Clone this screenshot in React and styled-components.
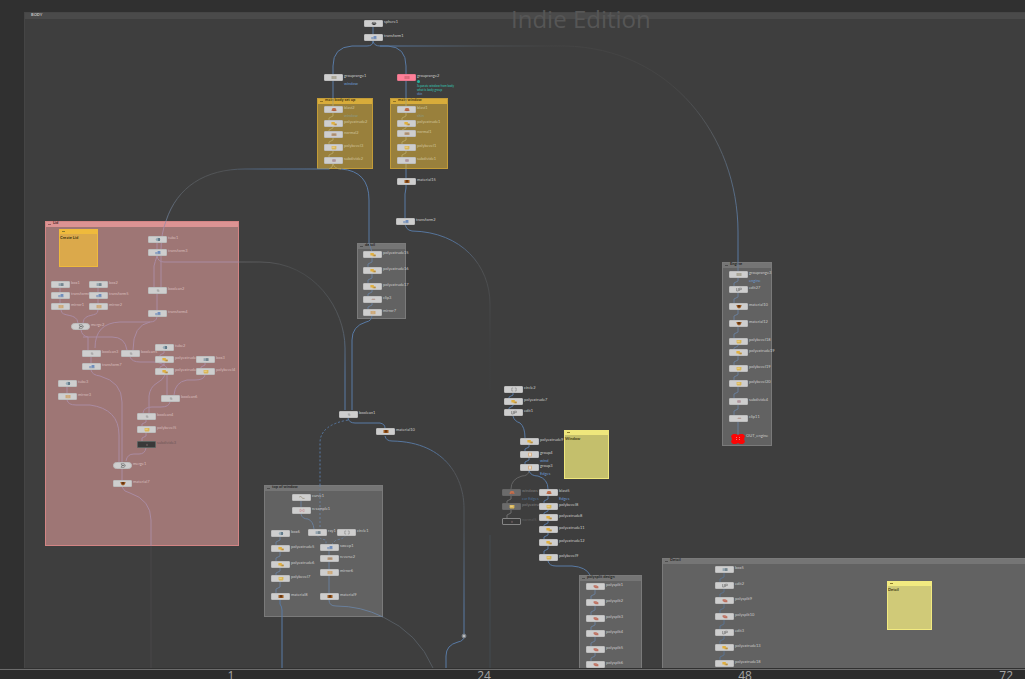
import React from "react";
import styled, { createGlobalStyle, css } from "styled-components";

const Global = createGlobalStyle`
  * { box-sizing: border-box; }
  html, body { margin: 0; background: #303030; }
  body { font-family: Lato, "Open Sans", sans-serif; overflow: hidden; }
`;

const Page = styled.main`
  display: flex;
  flex-direction: column;
  width: 100%;
  height: 100vh;
`;

const Canvas = styled.section`
  position: relative;
  flex: 1;
  min-height: 0;
  overflow: hidden;
  background: #303030;
  border-bottom: 1px solid #303030;
`;

const Timeline = styled.footer`
  display: grid;
  grid-template-columns: 101fr 260fr 246fr 276fr 142fr;
  height: 10px;
  overflow: hidden;
  background: #2c2c2c;
  border-top: 1px solid #6c6c6c;
  font-family: "Open Sans", "Noto Sans", sans-serif;
`;

const Frame = styled.span`
  padding-right: ${(p) => (p.$last ? "12px" : "0")};
  text-align: ${(p) => (p.$last ? "right" : "center")};
  font-size: 12px;
  line-height: 12px;
  color: #a6a6a6;
`;

const Watermark = styled.h1`
  position: absolute;
  left: 511px;
  top: 2px;
  margin: 0;
  font-family: "Open Sans", "Noto Sans", sans-serif;
  font-size: 24px;
  line-height: 34px;
  font-weight: 400;
  color: #565656;
  white-space: nowrap;
`;

const NetworkBox = styled.div`
  position: absolute;
  left: 24px;
  top: 12px;
  right: 0;
  bottom: 0;
  background: #3e3e3e;
  border-left: 1px solid #454545;
`;

const NetworkTitle = styled.div`
  height: 7px;
  padding-left: 6px;
  background: #4a4a4a;
  border-top: 1px solid #464646;
  font-size: 4px;
  line-height: 3px;
  font-weight: 700;
  color: #c4c4c4;
`;

const tones = {
  yellow: { fill: "#99803c", head: "#d8ac3a", edge: "#c39c38", text: "#4a3a10" },
  pink: { fill: "#9e7675", head: "#dc9393", edge: "#d38484", text: "#4a2a2a" },
  grey: { fill: "#626262", head: "#757575", edge: "#7a7a7a", text: "#262626" },
};

const Group = styled.div`
  position: absolute;
  left: ${(p) => p.$x}px;
  top: ${(p) => p.$y}px;
  width: ${(p) => p.$w}px;
  height: ${(p) => p.$h}px;
  background: ${(p) => tones[p.$tone].fill};
  border: 1px solid ${(p) => tones[p.$tone].edge};
`;

const GroupTitle = styled.div`
  display: flex;
  align-items: flex-start;
  gap: 2px;
  height: 5px;
  padding-left: 2px;
  background: ${(p) => tones[p.$tone].head};
  color: ${(p) => tones[p.$tone].text};
  font-size: 4px;
  line-height: 1px;
  font-weight: 700;
  white-space: nowrap;

  &::before {
    content: "";
    width: 3px;
    height: 1px;
    margin-top: 2px;
    background: currentColor;
    opacity: 0.5;
  }
`;

const Sticky = styled.div`
  position: absolute;
  left: ${(p) => p.$x}px;
  top: ${(p) => p.$y}px;
  width: ${(p) => p.$w}px;
  height: ${(p) => p.$h}px;
  padding: 1px 0 0 0;
  background: ${(p) => p.$fill};
  border: 1px solid ${(p) => p.$edge};
  border-top-width: 5px;
  font-size: 4px;
  line-height: 5px;
  font-weight: 700;
  color: #3c3612;

  &::before {
    content: "";
    position: absolute;
    left: 2px;
    top: -3px;
    width: 3px;
    height: 1px;
    background: #8d7c2c;
  }
`;

const Wires = styled.svg`
  position: absolute;
  left: 0;
  top: 0;
  width: 100%;
  height: 100%;
  fill: none;
`;

const NodeWrap = styled.div`
  position: absolute;
  left: ${(p) => p.$x - 9}px;
  top: ${(p) => p.$y - 3}px;
  display: flex;
  align-items: flex-start;
  gap: 1px;
`;

const looks = {
  normal: css`background: #cecece; border-color: #bdbdbd;`,
  pill: css`background: #cecece; border-color: #bdbdbd; border-radius: 4px;`,
  pink: css`background: #ff7f98; border-color: #e8768c;`,
  dark: css`background: #393939; border-color: #5c6260;`,
  dim: css`background: #6b6b6b; border-color: #666;`,
  hollow: css`background: #3a3a3a; border-color: #858585;`,
};

const NodeBody = styled.div`
  display: grid;
  place-items: center;
  width: 19px;
  height: 7px;
  border: 1px solid;
  border-radius: 1px;
  ${(p) => looks[p.$look]}
`;

const Labels = styled.div`
  display: flex;
  flex-direction: column;
  gap: 4px;
  font-size: 4px;
  line-height: 4px;
  white-space: nowrap;
  color: ${(p) => p.$color};
`;

const SubLabel = styled.span`
  color: ${(p) => p.$color || "#6a9bd4"};
`;

const NoteLabel = styled.p`
  position: absolute;
  left: 417px;
  top: 80px;
  margin: 0;
  font-size: 3px;
  line-height: 4px;
  color: #35c5b4;
  white-space: nowrap;

  &::before {
    content: "";
    display: block;
    width: 3px;
    height: 3px;
    margin-bottom: 1px;
    border-radius: 50%;
    background: #25b39f;
  }
`;

const glyphs = {
  sphere: <><ellipse cx="4" cy="2.5" rx="2.5" ry="1.8" fill="#8b8b8b" /><path d="M2 1l2 2 2-1.5-1 2.5H3z" fill="#3d3d3d" /></>,
  transform: <><path d="M1.2 2h2.4v2H1.2z" fill="#8ea3c4" /><path d="M3.6 1h2.8v3H3.6z" fill="#6f8dbd" /><path d="M1.5 4h5" stroke="#9ba4ae" strokeWidth=".6" /></>,
  range: <><rect x="1.5" y="1" width="5" height="3" fill="#a5a293" /><path d="M3.2 1v3M4.8 1v3" stroke="#bbb3a5" strokeWidth=".6" /></>,
  rangePink: <><rect x="1.5" y="1" width="5" height="3" fill="#d9687a" /><path d="M3.2 1v3M4.8 1v3" stroke="#e27586" strokeWidth=".6" /></>,
  blast: <><path d="M1.5 4l.6-2.2L3 1h2.2l.8.8.6 2.2z" fill="#bf6f4e" /><path d="M3 3.6h2.5" stroke="#a0553c" strokeWidth=".6" /></>,
  extrude: <><path d="M1.4 1h3.4v1.4h1.8v1.8H3.4V3.4h-2z" fill="#e0b040" /><path d="M4.6 2.8h2v1.4h-2z" fill="#b08a4c" /></>,
  bevel: <><path d="M1.6 1h4.8v2.8l-.6.6H2.2l-.6-.6z" fill="#d9b658" /><path d="M2.2 1.6h2.6V3H2.2z" fill="#e6cb80" /></>,
  normal: <><rect x="1.5" y="1.2" width="5" height="2.8" rx=".6" fill="#b99877" /><path d="M2.5 2.5h3" stroke="#938474" strokeWidth=".6" /></>,
  mirror: <><rect x="1.5" y="1" width="5" height="3.2" fill="#cba87a" /><path d="M4 .8v3.6" stroke="#d8ba93" strokeWidth=".6" /></>,
  subdivide: <><rect x="2" y="1" width="4" height="3" rx="1" fill="#b9a3a9" /><path d="M2.5 2.5h3M4 1.2v2.6" stroke="#a28b94" strokeWidth=".4" /></>,
  material: <><path d="M1.5 1h5v3h-5z" fill="#9b5a20" /><path d="M3 1h2v2.4H3z" fill="#6b3812" /></>,
  cup: <><path d="M1.4 1h5.2l-.6 2-1 1.2H3L2 3z" fill="#94551f" /><path d="M3 1h2v2H3z" fill="#653610" /></>,
  box: <><path d="M1.6 1.2h4.8v2.8H1.6z" fill="#94a4ae" /><path d="M4 1.2h2.4v2.8H4z" fill="#75868f" /></>,
  tube: <><ellipse cx="4" cy="2.5" rx="2.2" ry="1.8" fill="#94a9b4" /><path d="M4.3.9h1.5v3.2H4.3z" fill="#506b7c" /></>,
  boolean: <><path d="M2.8 1.5h1.5l1 1v1.4H3.8l-1-1z" fill="#b0b0b0" /><path d="M3.4 2h1.4" stroke="#929292" strokeWidth=".5" /></>,
  merge: <><path d="M2 .8h3.2l1.2 1.7-1.2 1.8H2l1-1.8z" fill="none" stroke="#707070" strokeWidth=".7" /><path d="M3 2.5h2.5" stroke="#555" strokeWidth=".7" /></>,
  clip: <><path d="M1.6 3.1l2-1.2h3l-1.2 1.2z" fill="#b8a39b" /><path d="M3 2h3" stroke="#a98678" strokeWidth=".4" /></>,
  circle: <path d="M3.2 1H1.8v3h1.4M4.8 1h1.4v3H4.8" stroke="#8e8e8e" strokeWidth=".7" fill="none" />,
  curve: <path d="M1.2 2L3 1.4l1.5 2L6.6 3.4" fill="none" stroke="#a6a092" strokeWidth="1" />,
  resample: <path d="M2 1l4 3M2 4l4-3M2 1v3M6 1v3" fill="none" stroke="#c8959b" strokeWidth=".6" />,
  edit: <path d="M1.6 1v3h1.8V1M4.4 4V1.2h2v1.4h-2" fill="none" stroke="#7c7c7c" strokeWidth=".7" />,
  group: <><rect x="2" y=".7" width="4" height="3.8" fill="#d6b088" /><rect x="3" y="1.4" width="2" height="2.3" fill="#ecdfce" /></>,
  split: <><path d="M1.6 1.2h2.6l2.2 1.4v1.6H3.6L1.6 3z" fill="#bd7060" /><path d="M2.4 3l3-1" stroke="#cf9384" strokeWidth=".4" /></>,
  dark: <path d="M3 3.5l1-2 1 2z" fill="#80686a" />,
};

function Node({ x, y, label, icon, look = "normal", sub, subColor, faint }) {
  const color = faint || (look === "dark" || look === "hollow" ? "#5d5d5d" : "#cacaca");
  return (
    <NodeWrap $x={x} $y={y}>
      <NodeBody $look={look}>
        <svg width="8" height="5" viewBox="0 0 8 5" aria-hidden="true">{glyphs[icon]}</svg>
      </NodeBody>
      <Labels $color={color}>
        <span>{label}</span>
        {sub && <SubLabel $color={subColor}>{sub}</SubLabel>}
      </Labels>
    </NodeWrap>
  );
}

const ROSE = "#d6bcbc";
const SAND = "#cfc39b";

/* Each column: centre x, wire colour, then [y, label, icon, extra] from top to bottom. */
const columns = [
  { x: 373, wire: "#587aa5", nodes: [[23, "sphere1", "sphere"], [37, "transform1", "transform"]] },
  { x: 333, nodes: [[77, "grouprange1", "range", { sub: "window" }]] },
  { x: 406, nodes: [[77, "grouprange2", "rangePink", { look: "pink" }]] },
  { x: 333, wire: "#b3a262", zig: true, faint: SAND, nodes: [[109, "blast2", "blast", { sub: "window", subColor: "#8b9a86" }], [123, "polyextrude2", "extrude"], [134, "normal2", "normal"], [147, "polybevel3", "bevel"], [160, "subdivide2", "subdivide"]] },
  { x: 406, wire: "#b3a262", zig: true, faint: SAND, nodes: [[109, "blast1", "blast", { sub: "skin", subColor: "#8b9a86" }], [123, "polyextrude1", "extrude"], [133, "normal1", "normal"], [147, "polybevel1", "bevel"], [160, "subdivide1", "subdivide"]] },
  { x: 406, nodes: [[181, "material15", "material"]] },
  { x: 405, nodes: [[221, "transform2", "transform"]] },
  { x: 157, wire: "#aa8ba2", faint: ROSE, nodes: [[239, "tube1", "tube"], [252, "transform3", "transform"]] },
  { x: 157, wire: "#aa8ba2", faint: ROSE, nodes: [[290, "boolean2", "boolean"], [313, "transform4", "transform"]] },
  { x: 60, wire: "#aa8ba2", faint: ROSE, nodes: [[284, "box1", "box"], [295, "transform6", "transform"], [306, "mirror1", "mirror"]] },
  { x: 98, wire: "#aa8ba2", faint: ROSE, nodes: [[284, "box2", "box"], [295, "transform5", "transform"], [306, "mirror2", "mirror"]] },
  { x: 80, faint: ROSE, nodes: [[326, "merge2", "merge", { look: "pill" }]] },
  { x: 91, wire: "#aa8ba2", faint: ROSE, nodes: [[353, "boolean3", "boolean"], [366, "transform7", "transform"]] },
  { x: 130, faint: ROSE, nodes: [[353, "boolean5", "boolean"]] },
  { x: 164, wire: "#aa8ba2", zig: true, faint: ROSE, nodes: [[347, "tube2", "tube"], [359, "polyextrude3", "extrude"], [371, "polyextrude4", "extrude"]] },
  { x: 205, wire: "#aa8ba2", zig: true, faint: ROSE, nodes: [[359, "box3", "box"], [371, "polybevel4", "bevel"]] },
  { x: 67, wire: "#aa8ba2", faint: ROSE, nodes: [[383, "tube3", "tube"], [396, "mirror3", "mirror"]] },
  { x: 170, faint: ROSE, nodes: [[398, "boolean6", "boolean"]] },
  { x: 146, wire: "#aa8ba2", zig: true, faint: ROSE, nodes: [[416, "boolean4", "boolean"], [429, "polybevel5", "bevel"], [444, "subdivide3", "dark", { look: "dark", faint: "#6f5858" }]] },
  { x: 122, wire: "#aa8ba2", faint: ROSE, nodes: [[465, "merge1", "merge", { look: "pill" }], [483, "material7", "cup"]] },
  { x: 372, wire: "#697f9b", zig: true, nodes: [[254, "polyextrude15", "extrude"], [270, "polyextrude16", "extrude"], [286, "polyextrude17", "extrude"], [299, "clip3", "clip"], [312, "mirror7", "mirror"]] },
  { x: 348, nodes: [[414, "boolean1", "boolean"]] },
  { x: 385, nodes: [[431, "material10", "material"]] },
  { x: 301, wire: "#697f9b", nodes: [[497, "curve1", "curve"], [510, "resample1", "resample"]] },
  { x: 317, nodes: [[532, "ray1", "box"]] },
  { x: 346, nodes: [[532, "circle1", "circle"]] },
  { x: 280, wire: "#697f9b", zig: true, nodes: [[533, "box6", "tube"], [548, "polyextrude5", "extrude"], [564, "polyextrude6", "extrude"], [578, "polybevel7", "bevel"], [596, "material8", "material"]] },
  { x: 329, wire: "#697f9b", nodes: [[547, "sweep1", "transform"], [558, "reverse2", "normal"], [572, "mirror6", "mirror"], [596, "material9", "material"]] },
  { x: 513, wire: "#587aa5", zig: true, nodes: [[389, "circle2", "circle"], [401, "polyextrude7", "extrude"], [412, "edit1", "edit"]] },
  { x: 529, wire: "#587aa5", zig: true, nodes: [[441, "polyextrude9", "extrude"], [454, "group4", "group", { sub: "wind" }], [467, "group3", "group", { sub: "Edges" }]] },
  { x: 511, wire: "#6e6e6e", zig: true, nodes: [[492, "windows", "blast", { look: "dim", faint: "#808080", sub: "car Edges", subColor: "#4d6e95" }], [506, "polyextrude", "bevel", { look: "dim", faint: "#808080" }], [521, "normal5", "dark", { look: "hollow" }]] },
  { x: 548, wire: "#587aa5", zig: true, nodes: [[492, "blast5", "blast", { sub: "Edges" }], [506, "polybevel8", "bevel"], [517, "polyextrude8", "extrude"], [529, "polyextrude11", "extrude"], [542, "polyextrude12", "extrude"], [557, "polybevel9", "bevel"]] },
  { x: 595, wire: "#697f9b", zig: true, nodes: [[586, "polysplit1", "split"], [602, "polysplit2", "split"], [618, "polysplit3", "split"], [633, "polysplit4", "split"], [649, "polysplit5", "split"], [664, "polysplit6", "split"]] },
  { x: 738, wire: "#697f9b", zig: true, nodes: [[274, "grouprange3", "range", { sub: "engine" }], [289, "edit27", "edit"], [306, "material10", "cup"], [323, "material12", "cup"], [341, "polybevel18", "bevel"], [352, "polyextrude19", "extrude"], [368, "polybevel19", "bevel"], [383, "polybevel20", "bevel"], [401, "subdivide4", "subdivide"], [418, "clip11", "clip"]] },
  { x: 724, wire: "#5b738f", zig: true, nodes: [[569, "box5", "box"], [585, "edit2", "edit"], [600, "polysplit9", "split"], [616, "polysplit10", "split"], [632, "edit3", "edit"], [647, "polyextrude13", "extrude"], [663, "polyextrude18", "extrude"]] },
];

const groups = [
  [317, 98, 56, 71, "yellow", "main body set up"],
  [390, 98, 58, 71, "yellow", "main window"],
  [45, 221, 194, 325, "pink", "Lid"],
  [357, 243, 49, 76, "grey", "detail"],
  [264, 485, 119, 132, "grey", "top of window"],
  [579, 575, 63, 120, "grey", "polysplit design"],
  [722, 262, 50, 184, "grey", "Engine"],
  [662, 558, 420, 120, "grey", "Detail"],
];

const stickies = [
  [59, 229, 39, 38, "#dba94b", "#efba3c", "Create Lid"],
  [564, 430, 45, 49, "#c4bf6c", "#efe77c", "Window"],
  [887, 581, 45, 49, "#d0ca78", "#f2ea80", "Detail"],
];

const BLUE = "#587aa5";
const LILAC = "#aa8ba2";

/* [path, stroke, dash] */
const wires = [
  ["M373 41 Q373 46 367 46 H352 Q333 47 333 66 V98", BLUE],
  ["M373 41 Q374 46 380 46 H388 Q406 47 406 66 V98", BLUE],
  ["M380 46 H565 C670 48 738 136 738 232 V262", "url(#long)"],
  ["M738 262 V271", "#697f9b"],
  ["M333 98 V106 M406 98 V106", "#b3a262"],
  ["M333 163 Q333 168 329 169 M333 163 Q334 169 341 169", "#b3a262"],
  ["M406 163 V169", "#b3a262"],
  ["M329 169 H245 C205 169 177 187 166 221", "url(#left)"],
  ["M341 169 Q369 171 369 200 V243", BLUE],
  ["M369 243 L372 252", "#697f9b"],
  ["M406 169 V188 L405 194 V222 Q405 230 412 231 C462 232 490 266 490 304 V390", "url(#right)"],
  ["M490 535 V668", "#434a51"],
  ["M166 221 Q161 234 161 250 V287", LILAC],
  ["M157 256 Q155 262 154 266 V287 M157 256 Q158 262 164 262 H239", LILAC],
  ["M239 262 H260 C315 262 345 310 345 348 V410", "url(#cut)"],
  ["M61 310 C61 318 77 312 78 323 M98 310 C98 318 84 312 83 323", LILAC],
  ["M157 317 Q156 322 150 322 H120 Q95 323 95 348 M150 322 Q133 325 133 350", LILAC],
  ["M81 330 Q82 336 88 337 V350 M83 337 H112 Q125 337 127 350", LILAC],
  ["M130 357 Q132 362 140 362 H154 Q164 363 167 368 V395", LILAC],
  ["M165 375 Q163 380 157 383 Q150 387 149 396 V413", LILAC],
  ["M205 375 Q204 380 195 380 H187 Q175 382 174 395", LILAC],
  ["M170 402 Q169 407 161 407 H152 Q144 407 143 413", LILAC],
  ["M91 370 Q92 375 100 376 Q122 382 122 402 V462", LILAC],
  ["M67 400 Q68 405 76 405 H90 Q119 409 119 435 V462", LILAC],
  ["M146 448 Q145 454 139 454 H134 Q127 454 126 461", LILAC],
  ["M122 487 Q124 492 130 493 Q151 500 151 520 V546", LILAC],
  ["M151 546 V668", "#494748"],
  ["M372 315 Q372 321 366 322 Q352 326 352 340 V410", BLUE],
  ["M348 418 Q349 423 355 423 H380 Q385 424 385 428", BLUE],
  ["M348 420 Q320 425 320 443 V485", BLUE, "2 2"],
  ["M320 485 V529", "#697f9b", "2 2"],
  ["M385 436 Q386 441 392 441 C448 442 464 481 464 508 V636", "url(#arc)"],
  ["M464 636 Q464 641 458 642 Q446 645 446 656 V668", BLUE],
  ["M301 514 Q302 519 308 519 Q313 521 314 529", "#697f9b"],
  ["M317 535 Q319 539 326 540 V544 M346 535 Q344 539 336 540 L332 544", "#697f9b", "2 2"],
  ["M280 600 V604 Q282 607 282 610 V668", BLUE],
  ["M329 600 Q329 606 336 606 Q361 606 383 617", "#697f9b"],
  ["M383 617 Q418 633 433 668", "#555b61"],
  ["M513 416 Q514 421 520 423 Q525 427 525 438", BLUE],
  ["M529 471 Q528 476 522 476 Q511 479 511 489", "#646464"],
  ["M529 471 Q531 476 538 476 Q548 479 548 489", BLUE],
  ["M548 561 Q549 566 556 566 H572 Q586 567 590 575", BLUE],
];

const OutFlag = styled.div`
  position: absolute;
  left: 731px;
  top: 434px;
  display: flex;
  gap: 1px;
  font-size: 4px;
  line-height: 4px;
  color: #cacaca;
  white-space: nowrap;
`;

function columnPath(col) {
  const parts = [];
  for (let i = 1; i < col.nodes.length; i += 1) {
    const top = col.nodes[i - 1][0] + 4;
    const end = col.nodes[i][0] - 3;
    const mid = Math.round((top + end) / 2);
    parts.push(col.zig
      ? `M${col.x} ${top}V${mid - 1}L${col.x - 4} ${mid + 1}V${end}`
      : `M${col.x} ${top}V${end}`);
  }
  return parts.join("");
}

function Gradient({ id, from, to, stops }) {
  return (
    <linearGradient id={id} gradientUnits="userSpaceOnUse" x1={from[0]} y1={from[1]} x2={to[0]} y2={to[1]}>
      {stops.map(([offset, color]) => <stop key={offset} offset={offset} stopColor={color} />)}
    </linearGradient>
  );
}

export default function App() {
  return (
    <Page>
      <Global />
      <Canvas aria-label="Network editor">
        <NetworkBox><NetworkTitle>BODY</NetworkTitle></NetworkBox>
        <Watermark>Indie Edition</Watermark>
        {groups.map(([x, y, w, h, tone, title]) => (
          <Group key={`${x}-${y}`} $x={x} $y={y} $w={w} $h={h} $tone={tone}>
            <GroupTitle $tone={tone}>{title}</GroupTitle>
          </Group>
        ))}
        <Wires aria-hidden="true">
          <defs>
            <Gradient id="long" from={[380, 46]} to={[738, 262]} stops={[[0, BLUE], [0.2, "#4d5358"], [0.34, "#434343"], [0.65, "#454545"], [0.8, "#565b60"], [1, BLUE]]} />
            <Gradient id="left" from={[329, 169]} to={[166, 221]} stops={[[0, BLUE], [0.4, "#506580"], [0.58, "#505254"], [0.85, "#565a5e"], [1, "#647287"]]} />
            <Gradient id="right" from={[405, 220]} to={[490, 350]} stops={[[0, BLUE], [0.3, "#536f93"], [0.5, "#505254"], [1, "#3f4041"]]} />
            <Gradient id="cut" from={[239, 262]} to={[345, 375]} stops={[[0, "#5f5f61"], [0.3, "#484a4b"], [0.75, "#54585c"], [1, BLUE]]} />
            <Gradient id="arc" from={[385, 436]} to={[464, 610]} stops={[[0, BLUE], [0.2, "#536f93"], [0.32, "#525457"], [0.6, "#50565d"], [1, BLUE]]} />
          </defs>
          {columns.map((col) => (
            <path key={`${col.x}-${col.nodes[0][0]}`} d={columnPath(col)} stroke={col.wire} />
          ))}
          {wires.map(([d, stroke, dash]) => (
            <path key={d} d={d} stroke={stroke} strokeDasharray={dash} />
          ))}
          <path d="M738 422V435" stroke="#697f9b" />
          <circle cx="464" cy="636" r="2" fill="#b9b9b9" stroke="#6f7780" />
        </Wires>
        {stickies.map(([x, y, w, h, fill, edge, text]) => (
          <Sticky key={`${x}-${y}`} $x={x} $y={y} $w={w} $h={h} $fill={fill} $edge={edge}>{text}</Sticky>
        ))}
        {columns.map((col) => col.nodes.map(([y, label, icon, extra]) => (
          <Node key={`${col.x}-${y}`} x={col.x} y={y} label={label} icon={icon} faint={col.faint} {...extra} />
        )))}
        <NoteLabel>Separate window from body<br />what is body group<br /><SubLabel>skin</SubLabel></NoteLabel>
        <OutFlag>
          <svg width="14" height="10" viewBox="0 0 14 10" aria-hidden="true">
            <path d="M2 0h3l2 1 2-1h3l2 2-1 3 1 3-2 2H9L7 9l-2 1H2L0 8l1-3-1-3z" fill="#fb0505" />
            <path d="M5.500 3v4M8.500 3v4" stroke="#f87070" strokeWidth="1" strokeDasharray="1 1" />
          </svg>
          <span>OUT_engine</span>
        </OutFlag>
      </Canvas>
      <Timeline>
        <span />
        <Frame>1</Frame>
        <Frame>24</Frame>
        <Frame>48</Frame>
        <Frame $last>72</Frame>
      </Timeline>
    </Page>
  );
}
